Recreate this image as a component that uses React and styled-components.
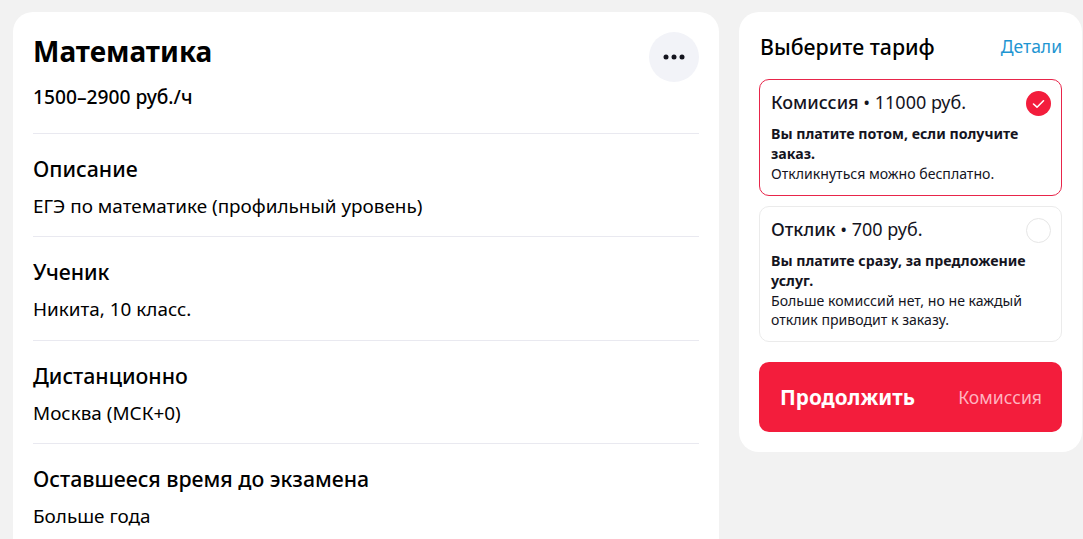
import styled, { createGlobalStyle } from "styled-components";

const GlobalStyle = createGlobalStyle`
  html, body {
    margin: 0;
    height: 100%;
    overflow: hidden;
    background: #f2f2f2;
    font-family: "Noto Sans", "Open Sans", sans-serif;
    color: #000;
  }
`;

const Page = styled.div`
  display: flex;
  align-items: flex-start;
  gap: 20px;
  padding: 12px 1px 0 13px;
  height: 539px;
  box-sizing: border-box;
  overflow: hidden;
`;
const MainCard = styled.main`
  width: 706px;
  flex: none;
  background: #fff;
  border-radius: 20px;
  padding: 20px 20px 24px;
  box-sizing: border-box;
`;
const Header = styled.div`
  display: flex;
  justify-content: space-between;
  align-items: flex-start;
  padding-bottom: 24px;
`;
const Title = styled.h1`
  margin: 0;
  font-size: 28px;
  line-height: 38px;
  font-weight: 700;
`;
const Price = styled.div`
  margin-top: 15px;
  font-size: 19.2px;
  line-height: 24px;
  font-weight: 500;
`;
const MoreButton = styled.button`
  width: 50px;
  height: 50px;
  border: none;
  border-radius: 50%;
  background: #f2f3f8;
  display: flex;
  align-items: center;
  justify-content: center;
  padding: 0;
`;
const Section = styled.section`
  border-top: 1px solid #e9e9f0;
  padding: 20px 0 17px;
`;
const SectionTitle = styled.h2`
  margin: 0 0 9px;
  font-size: 21.3px;
  line-height: 30px;
  font-weight: 500;
`;
const SectionText = styled.p`
  margin: 0;
  font-size: 18.9px;
  line-height: 26.4px;
`;
const Side = styled.aside`
  width: 343px;
  flex: none;
  background: #fff;
  border-radius: 20px;
  padding: 20px;
  box-sizing: border-box;
`;
const SideHeader = styled.div`
  display: flex;
  justify-content: space-between;
  align-items: center;
  height: 28px;
  padding-left: 1px;
  margin-bottom: 19px;
`;
const SideTitle = styled.h2`
  margin: 0;
  font-size: 21.3px;
  font-weight: 500;
`;
const DetailsLink = styled.a`
  font-size: 17.5px;
  color: #1e95d2;
`;
const Tariff = styled.div`
  position: relative;
  border: 1px solid ${(p) => (p.$active ? "#e8254a" : "#ebebeb")};
  border-radius: 10px;
  padding: 10px 11px 12px;
  margin-bottom: 10px;
  color: #14141e;
`;
const TariffName = styled.div`
  font-size: 18px;
  line-height: 24px;
  margin-bottom: 10px;
`;
const NameStrong = styled.span`
  font-weight: 500;
`;
const TariffNote = styled.div`
  font-size: 14.2px;
  line-height: 20px;
  font-weight: 700;
`;
const TariffText = styled.div`
  font-size: 14.1px;
  line-height: 19px;
`;
const Radio = styled.span`
  position: absolute;
  top: 11px;
  right: 10px;
  width: 25px;
  height: 25px;
  box-sizing: border-box;
  border-radius: 50%;
  display: flex;
  align-items: center;
  justify-content: center;
  background: ${(p) => (p.$active ? "#f31d3c" : "#fff")};
  border: ${(p) => (p.$active ? "none" : "1px solid #e6e6e6")};
`;
const Continue = styled.button`
  width: 100%;
  height: 70px;
  margin-top: 20px;
  border: none;
  border-radius: 10px;
  background: #f31d3c;
  color: #fff;
  font-family: inherit;
  display: flex;
  align-items: center;
  justify-content: space-between;
  padding: 0 20px 0 21px;
`;
const ContinueLabel = styled.span`
  font-size: 20.7px;
  font-weight: 700;
`;
const ContinueHint = styled.span`
  font-size: 17.6px;
  color: #ffb3bf;
`;

const sections = [
  ["Описание", "ЕГЭ по математике (профильный уровень)"],
  ["Ученик", "Никита, 10 класс."],
  ["Дистанционно", "Москва (МСК+0)"],
  ["Оставшееся время до экзамена", "Больше года"],
];

export default function App() {
  return (
    <Page>
      <GlobalStyle />
      <MainCard>
        <Header>
          <div>
            <Title>Математика</Title>
            <Price>1500–2900 руб./ч</Price>
          </div>
          <MoreButton aria-label="Ещё">
            <svg width="22" height="6" viewBox="0 0 22 6" fill="#14141e">
              <circle cx="3" cy="3" r="2.5" />
              <circle cx="11" cy="3" r="2.5" />
              <circle cx="19" cy="3" r="2.5" />
            </svg>
          </MoreButton>
        </Header>
        {sections.map(([title, text]) => (
          <Section key={title}>
            <SectionTitle>{title}</SectionTitle>
            <SectionText>{text}</SectionText>
          </Section>
        ))}
      </MainCard>
      <Side>
        <SideHeader>
          <SideTitle>Выберите тариф</SideTitle>
          <DetailsLink>Детали</DetailsLink>
        </SideHeader>
        <Tariff $active>
          <TariffName>
            <NameStrong>Комиссия</NameStrong> • 11000 руб.
          </TariffName>
          <TariffNote>Вы платите потом, если получите заказ.</TariffNote>
          <TariffText>Откликнуться можно бесплатно.</TariffText>
          <Radio $active>
            <svg width="13" height="10" viewBox="0 0 13 10" fill="none" stroke="#fff" strokeWidth="1.6" strokeLinecap="round" strokeLinejoin="round">
              <path d="M1.5 5 L5 8.2 L11.5 1.8" />
            </svg>
          </Radio>
        </Tariff>
        <Tariff>
          <TariffName>
            <NameStrong>Отклик</NameStrong> • 700 руб.
          </TariffName>
          <TariffNote>Вы платите сразу, за предложение услуг.</TariffNote>
          <TariffText>Больше комиссий нет, но не каждый отклик приводит к заказу.</TariffText>
          <Radio />
        </Tariff>
        <Continue>
          <ContinueLabel>Продолжить</ContinueLabel>
          <ContinueHint>Комиссия</ContinueHint>
        </Continue>
      </Side>
    </Page>
  );
}
